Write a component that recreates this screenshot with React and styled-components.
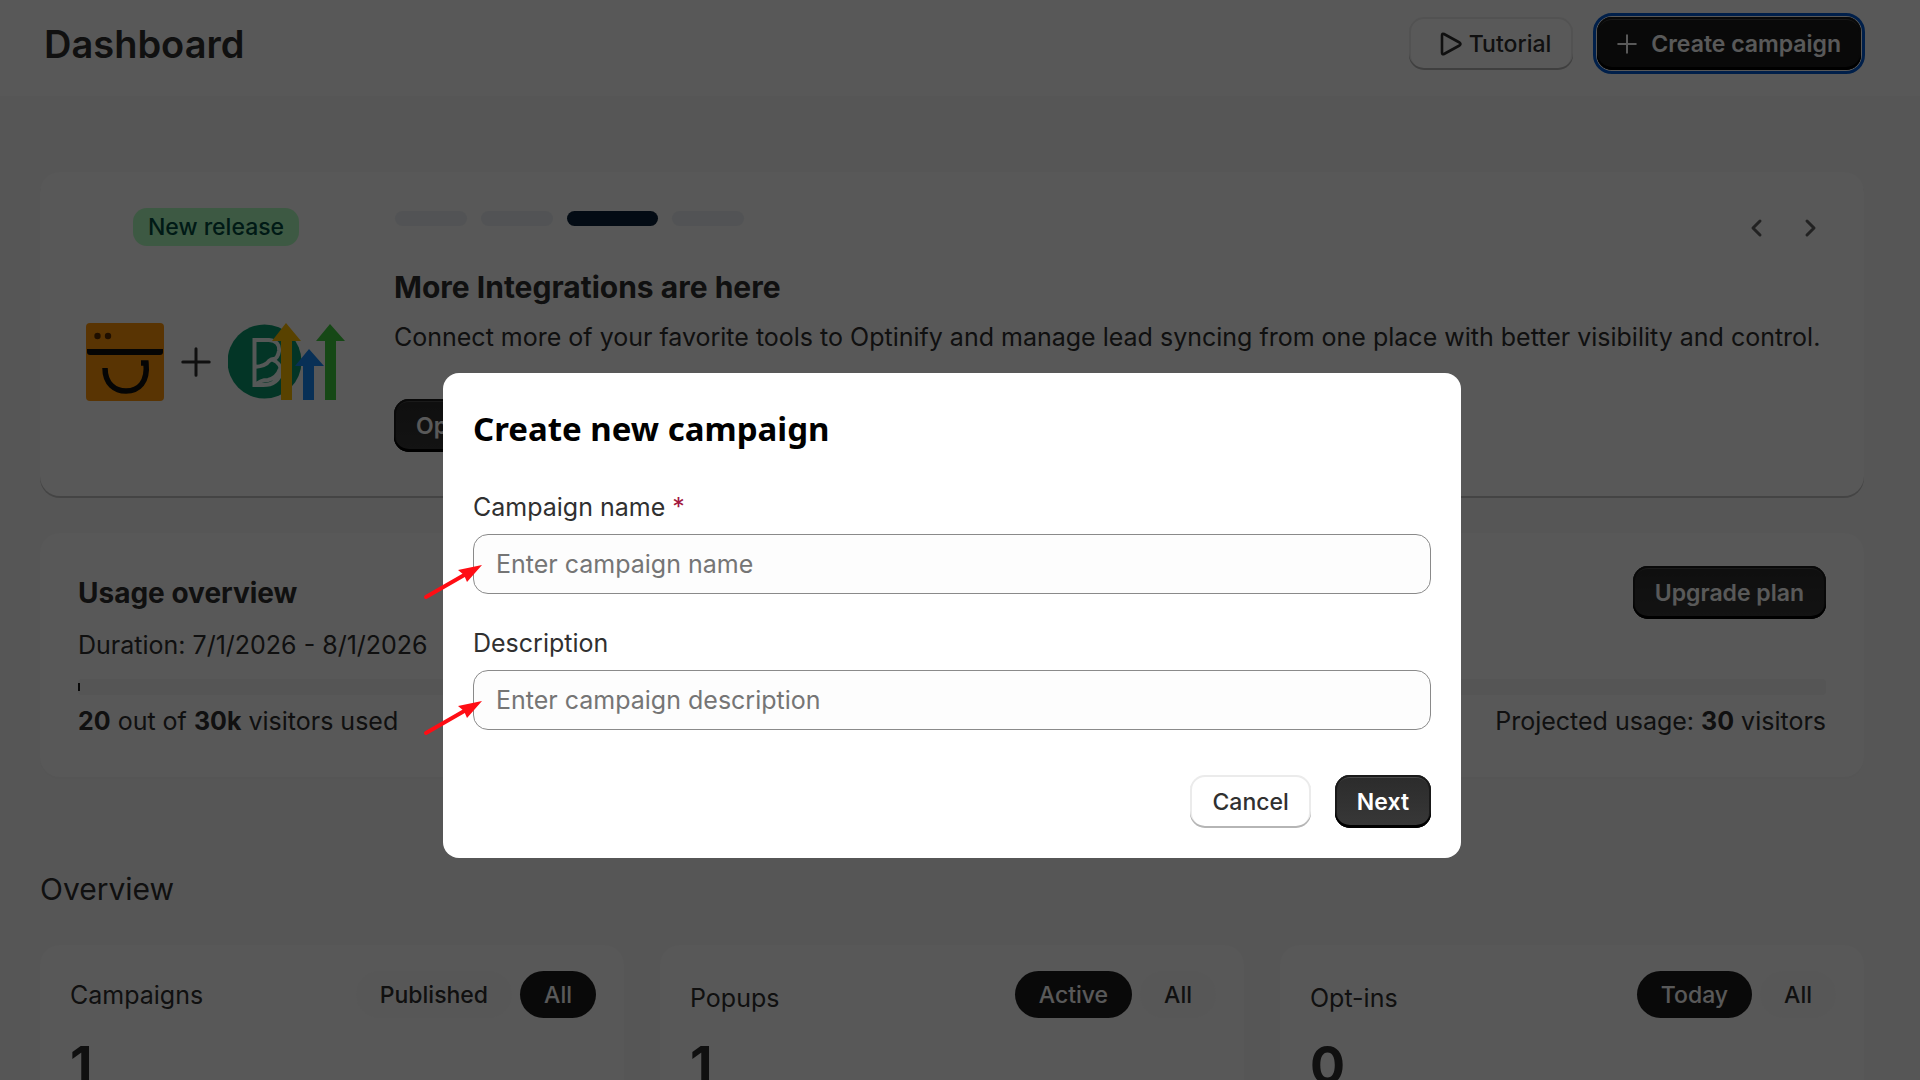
import { useState } from 'react'
import styled, { createGlobalStyle, css } from 'styled-components'

const GlobalStyle = createGlobalStyle`
* { box-sizing: border-box; }
body {
margin: 0;
background: #f6f6f6;
color: #303030;
font-family: Inter, "Liberation Sans", sans-serif;
font-size: 25px;
line-height: 36px;
overflow: hidden;
}
h1, h2, h3, p { margin: 0; }
button, input { font: inherit; }
`

const Header = styled.header`
display: flex;
align-items: center;
justify-content: space-between;
height: 96px;
padding: 0 59px 9px 44px;
background: #fbfbfb;
`
const PageTitle = styled.h1`
font-size: 38px;
line-height: 44px;
font-weight: 600;
`
const HeaderActions = styled.div`
display: flex;
align-items: center;
gap: 24px;
`
const Button = styled.button`
display: inline-flex;
align-items: center;
justify-content: center;
gap: ${({ $gap }) => $gap || 6}px;
height: 53px;
padding: 0 ${({ $pad }) => $pad || 22}px;
border: 0;
border-radius: 15px;
font-size: 23px;
font-weight: 500;
white-space: nowrap;
color: #303030;
background: #ffffff;
box-shadow: inset 0 -2px 0 #b5b5b5, inset 0 0 0 2px #ebebeb;
${({ $primary }) => $primary && css`
color: #ffffff;
font-weight: 600;
background: linear-gradient(#2b2b2b, #383838);
box-shadow: inset 0 -3px 0 #000000, inset 0 0 0 2px #1a1a1a, inset 0 3px 0 #4a4a4a;
`}
${({ $focused }) => $focused && css`
background: #1a1a1a;
outline: 3px solid #005bd3;
outline-offset: 1px;
`}
`
const Main = styled.main`
display: flex;
flex-direction: column;
padding: 76px 56px 60px 40px;
`
const Card = styled.section`
background: #fbfbfb;
border-radius: 20px;
box-shadow: 0 2px 0 ${({ $edge }) => $edge || '#f3f3f3'};
`
const NewsCard = styled(Card)`
display: flex;
gap: 38px;
padding: 34px 32px 44px 38px;
`
const NewsAside = styled.div`
display: flex;
flex-direction: column;
align-items: center;
width: 278px;
padding: 2px 2px 0 0;
gap: 77px;
`
const Badge = styled.span`
padding: 1px 15px;
border-radius: 14px;
font-size: 23px;
font-weight: 500;
color: #014b40;
background: #affebf;
`
const LogoRow = styled.div`
display: flex;
align-items: center;
gap: 17px;
`
const NewsBody = styled.div`
flex: 1;
`
const NewsTop = styled.div`
display: flex;
justify-content: space-between;
`
const Steps = styled.div`
display: flex;
gap: 14px;
padding: 5px 0 0 1px;
`
const Step = styled.span`
width: ${({ $active }) => ($active ? 91 : 72)}px;
height: 15px;
border-radius: 8px;
background: ${({ $active }) => ($active ? '#0b2239' : '#eaeef2')};
`
const Arrows = styled.div`
display: flex;
gap: 12px;
`
const IconButton = styled.button`
display: flex;
align-items: center;
justify-content: center;
width: 43px;
height: 43px;
padding: 0;
border: 0;
background: none;
color: #616161;
`
const NewsTitle = styled.h2`
margin-top: 18px;
font-size: 30px;
line-height: 40px;
font-weight: 700;
`
const NewsText = styled.p`
margin: 12px 0 44px;
`
const UsageCard = styled(Card)`
margin-top: 37px;
padding: 33px 38px 38px;
`
const Row = styled.div`
display: flex;
align-items: center;
justify-content: space-between;
`
const UsageTitle = styled.h2`
font-size: 28px;
line-height: 36px;
font-weight: 700;
`
const Duration = styled.p`
margin: 8px 0 16px;
`
const Track = styled.div`
display: flex;
align-items: center;
height: 16px;
margin-bottom: 8px;
border-radius: 4px;
background: #f3f3f3;
`
const Fill = styled.span`
height: 8px;
background: #1a1a1a;
`
const SectionTitle = styled.h2`
margin: 94px 0 38px;
font-size: 30px;
line-height: 36px;
font-weight: 400;
`
const Stats = styled.div`
display: grid;
grid-template-columns: repeat(3, 1fr);
gap: 36px;
`
const StatCard = styled(Card)`
padding: 26px 28px 40px 30px;
`
const StatHead = styled(Row)`
align-items: ${({ $low }) => ($low ? 'flex-end' : 'center')};
margin-bottom: 18px;
`
const StatLabel = styled.h3`
font-size: 25px;
line-height: 40px;
font-weight: 400;
`
const Pills = styled.div`
display: flex;
gap: 8px;
`
const Pill = styled.button`
height: 47px;
padding: 0 24px;
border: 0;
border-radius: 24px;
font-size: 23px;
font-weight: 500;
color: ${({ $on }) => ($on ? '#ffffff' : '#303030')};
background: ${({ $on }) => ($on ? '#1a1a1a' : '#fafafa')};
`
const Value = styled.p`
font-size: 52px;
line-height: 60px;
font-weight: 700;
`
const Backdrop = styled.div`
position: fixed;
inset: 0;
display: flex;
align-items: center;
justify-content: center;
padding: 151px 16px 0 0;
background: rgba(0, 0, 0, 0.65);
`
const Modal = styled.form`
width: 1018px;
max-width: 90%;
padding: 34px 30px 30px;
border-radius: 16px;
background: #ffffff;
`
const ModalTitle = styled.h2`
margin-bottom: 38px;
color: #000000;
font-family: "Noto Sans", "Open Sans", sans-serif;
font-size: 33px;
line-height: 44px;
font-weight: 700;
`
const Field = styled.div`
position: relative;
display: flex;
flex-direction: column;
gap: 9px;
margin-bottom: 31px;
`
const Required = styled.span`
color: #a3173f;
`
const Input = styled.input`
width: 100%;
height: 60px;
padding: 0 22px;
border: 1px solid #8a8a8a;
border-radius: 15px;
outline: 0;
background: #fdfdfd;
color: #303030;
&::placeholder {
color: #757575;
opacity: 1;
}
`
const Pointer = styled.svg`
position: absolute;
left: -51px;
bottom: -8px;
`
const ModalActions = styled.div`
display: flex;
justify-content: flex-end;
gap: 24px;
padding-top: 14px;
`

const stats = [
    { label: 'Campaigns', value: 1, options: ['Published', 'All'], selected: 'All' },
    { label: 'Popups', value: 1, options: ['Active', 'All'], selected: 'Active', low: true },
    { label: 'Opt-ins', value: 0, options: ['Today', 'All'], selected: 'Today', low: true },
]

function PlayIcon(){
    return(
        <svg width="32" height="26" viewBox="-8 0 32 26" fill="none" stroke="currentColor" strokeWidth="2.600" strokeLinejoin="round">
            <path d="M3 4.200 Q3 2 5 3 L20.500 11.500 Q22.500 13 20.500 14.500 L5 23 Q3 24 3 21.800 Z" />
        </svg>
    )
}

function PlusIcon({ size, stroke }){
    return(
        <svg width={size} height={size} viewBox="0 0 20 20" fill="none" stroke="currentColor" strokeWidth={stroke} strokeLinecap="round">
            <path d="M10 1.200V18.800M1.200 10H18.800" />
        </svg>
    )
}

function Chevron({ d }){
    return(
        <svg width="14" height="20" viewBox="0 0 14 20" fill="none" stroke="currentColor" strokeWidth="3" strokeLinecap="round" strokeLinejoin="round">
            <path d={d} />
        </svg>
    )
}

function ShopLogo(){
    return(
        <svg width="78" height="78" viewBox="0 0 78 78">
            <rect width="78" height="78" rx="4" fill="#ff960a" />
            <path d="M1 26H77V29Q77 32 74 32H4Q1 32 1 29Z" fill="#101010" />
            <circle cx="11.500" cy="13" r="3.200" fill="#5a2d00" />
            <circle cx="22" cy="13" r="3.200" fill="#5a2d00" />
            <path d="M19 45C19 61 29 68 40 68C53 68 62 59 60 40H55" fill="none" stroke="#101010" strokeWidth="5.500" />
        </svg>
    )
}

function PartnerLogos(){
    return(
        <svg width="118" height="78" viewBox="0 0 118 78">
            <circle cx="36.500" cy="38.500" r="37" fill="#0b996e" />
            <path d="M26.500 17H41Q52 18 51 28Q50 35 45 37Q53 40 53 49Q50 62 35 62H26.500Z M26.500 44Q38 43 41 38Q44 35 49 36 M28 62Q32 57 40 57Q49 55 52 46" fill="none" stroke="#f4fbf8" strokeWidth="4" />
            <path d="M44 18L58 0L73 18H64V77H53V18Z" fill="#ffbc00" />
            <path d="M67 43L81 26L96 43H86V77H75V43Z" fill="#188bf6" />
            <path d="M88 18L102 1L117 18H108V77H97V18Z" fill="#37ca37" fillOpacity="0.950" />
        </svg>
    )
}

function RedPointer(){
    return(
        <Pointer width="62" height="40" viewBox="0 0 62 40" aria-hidden="true">
            <path d="M4 35L44 12" stroke="#ff0d14" strokeWidth="4" strokeLinecap="round" />
            <path d="M60 3L36 8L42 13L45 20Z" fill="#ff0d14" />
        </Pointer>
    )
}

function App(){
    const [name, setName] = useState('')
    const [description, setDescription] = useState('')
    const used = 20
    const limit = 30000

    return(
        <>
            <GlobalStyle />
            <Header>
                <PageTitle>Dashboard</PageTitle>
                <HeaderActions>
                    <Button type="button"><PlayIcon /> Tutorial</Button>
                    <Button type="button" $primary $focused $gap={14} $pad={20}><PlusIcon size={20} stroke={2} /> Create campaign</Button>
                </HeaderActions>
            </Header>
            <Main>
                <NewsCard $edge="#c4c4c4">
                    <NewsAside>
                        <Badge>New release</Badge>
                        <LogoRow>
                            <ShopLogo />
                            <PlusIcon size={30} stroke={2} />
                            <PartnerLogos />
                        </LogoRow>
                    </NewsAside>
                    <NewsBody>
                        <NewsTop>
                            <Steps>
                                <Step />
                                <Step />
                                <Step $active />
                                <Step />
                            </Steps>
                            <Arrows>
                                <IconButton type="button" aria-label="Previous"><Chevron d="M11 3L4 10L11 17" /></IconButton>
                                <IconButton type="button" aria-label="Next"><Chevron d="M3 3L10 10L3 17" /></IconButton>
                            </Arrows>
                        </NewsTop>
                        <NewsTitle>More Integrations are here</NewsTitle>
                        <NewsText>Connect more of your favorite tools to Optinify and manage lead syncing from one place with better visibility and control.</NewsText>
                        <Button type="button" $primary>Open</Button>
                    </NewsBody>
                </NewsCard>

                <UsageCard>
                    <Row>
                        <UsageTitle>Usage overview</UsageTitle>
                        <Button type="button" $primary>Upgrade plan</Button>
                    </Row>
                    <Duration>Duration: 7/1/2026 - 8/1/2026</Duration>
                    <Track>
                        <Fill style={{ width: `${Math.max((used / limit) * 100, 0.1)}%` }} />
                    </Track>
                    <Row>
                        <p><b>20</b> out of <b>30k</b> visitors used</p>
                        <p>Projected usage: <b>30</b> visitors</p>
                    </Row>
                </UsageCard>

                <SectionTitle>Overview</SectionTitle>
                <Stats>
                    {stats.map((stat) =>(
                        <StatCard key={stat.label}>
                            <StatHead $low={stat.low}>
                                <StatLabel>{stat.label}</StatLabel>
                                <Pills>
                                    {stat.options.map((option) =>(
                                        <Pill key={option} type="button" $on={option === stat.selected}>{option}</Pill>
                                    ))}
                                </Pills>
                            </StatHead>
                            <Value>{stat.value}</Value>
                        </StatCard>
                    ))}
                </Stats>
            </Main>

            <Backdrop>
                <Modal role="dialog" aria-labelledby="modal-title" onSubmit={(e) => e.preventDefault()}>
                    <ModalTitle id="modal-title">Create new campaign</ModalTitle>
                    <Field>
                        <label htmlFor="name">Campaign name <Required>*</Required></label>
                        <Input id="name" placeholder="Enter campaign name" value={name} onChange={(e) => setName(e.target.value)} />
                        <RedPointer />
                    </Field>
                    <Field>
                        <label htmlFor="description">Description</label>
                        <Input id="description" placeholder="Enter campaign description" value={description} onChange={(e) => setDescription(e.target.value)} />
                        <RedPointer />
                    </Field>
                    <ModalActions>
                        <Button type="button">Cancel</Button>
                        <Button type="submit" $primary>Next</Button>
                    </ModalActions>
                </Modal>
            </Backdrop>
        </>
    )
}

export default App
